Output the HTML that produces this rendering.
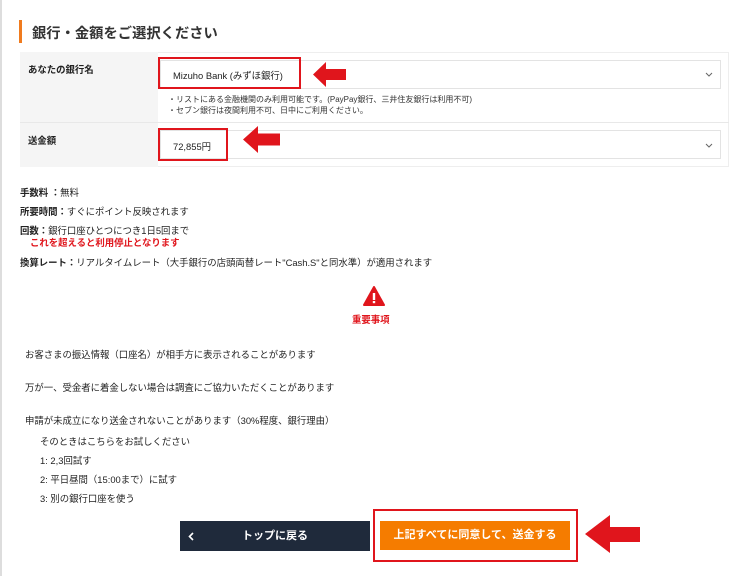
<!DOCTYPE html>
<html><head><meta charset="utf-8"><style>
*{margin:0;padding:0;box-sizing:border-box}
body{width:740px;height:576px;background:#fff;font-family:"Liberation Sans","Noto Sans CJK JP",sans-serif;color:#222;position:relative;overflow:hidden}
.a{position:absolute;white-space:nowrap}
.t{font-size:9.4px}
.b{font-weight:bold}
</style></head><body>
<div class="a" style="left:0;top:0;width:2px;height:576px;background:#ddd"></div>
<div class="a" style="left:19px;top:20px;width:3px;height:23px;background:#f07b1e"></div>
<div class="a b" style="left:32px;top:22px;font-size:14.3px;color:#333">銀行・金額をご選択ください</div>
<div class="a" style="left:20px;top:52px;width:709px;height:115px;border:1px solid #eee"></div>
<div class="a" style="left:20px;top:52px;width:138px;height:115px;background:#f5f5f5"></div>
<div class="a" style="left:20px;top:122px;width:709px;height:1px;background:#e8e8e8"></div>
<div class="a t b" style="left:28px;top:62px">あなたの銀行名</div>
<div class="a t b" style="left:28px;top:133px">送金額</div>
<div class="a" style="left:160px;top:60px;width:561px;height:29px;border:1px solid #e3e3e3;background:#fff"></div>
<div class="a" style="left:160px;top:130px;width:561px;height:29px;border:1px solid #e3e3e3;background:#fff"></div>
<svg class="a" style="left:705px;top:72px" width="8" height="5"><path d="M1 1 L4 4 L7 1" fill="none" stroke="#666" stroke-width="1"/></svg>
<svg class="a" style="left:705px;top:143px" width="8" height="5"><path d="M1 1 L4 4 L7 1" fill="none" stroke="#666" stroke-width="1"/></svg>
<div class="a" style="left:158px;top:57px;width:143px;height:32px;border:2px solid #e0151c"></div>
<div class="a t" style="left:173px;top:68px">Mizuho Bank (みずほ銀行)</div>
<div class="a" style="left:158px;top:128px;width:70px;height:33px;border:2px solid #e0151c"></div>
<div class="a t" style="left:173px;top:139px">72,855円</div>
<svg class="a" style="left:312px;top:61px" width="36" height="27"><path d="M1 13.5 L14 1 V8 H34 V19 H14 V26 Z" fill="#e0151c"/></svg>
<svg class="a" style="left:242px;top:125px" width="40" height="29"><path d="M1 14.5 L16 1 V8.5 H38 V20.5 H16 V28 Z" fill="#e0151c"/></svg>
<div class="a" style="left:168px;top:94px;font-size:8px;color:#333;line-height:11px">・リストにある金融機関のみ利用可能です。(PayPay銀行、三井住友銀行は利用不可)<br>・セブン銀行は夜間利用不可、日中にご利用ください。</div>
<div class="a t" style="left:20px;top:183px;line-height:19px"><b>手数料 ：</b>無料<br><b>所要時間：</b>すぐにポイント反映されます<br><b>回数：</b>銀行口座ひとつにつき1日5回まで</div>
<div class="a t b" style="left:30px;top:235px;color:#e0151c">これを超えると利用停止となります</div>
<div class="a t" style="left:20px;top:255px"><b>換算レート：</b>リアルタイムレート（大手銀行の店頭両替レート"Cash.S"と同水準）が適用されます</div>
<svg class="a" style="left:362px;top:285px" width="24" height="22"><path d="M12 2 L22 20 H2 Z" fill="#e0151c" stroke="#e0151c" stroke-width="2" stroke-linejoin="round"/><rect x="10.8" y="8" width="2.4" height="7" fill="#fff"/><rect x="10.8" y="16" width="2.4" height="2.2" fill="#fff"/></svg>
<div class="a t b" style="left:352px;top:312px;color:#e0151c">重要事項</div>
<div class="a t" style="left:25px;top:347px">お客さまの振込情報（口座名）が相手方に表示されることがあります</div>
<div class="a t" style="left:25px;top:380px">万が一、受金者に着金しない場合は調査にご協力いただくことがあります</div>
<div class="a t" style="left:25px;top:413px">申請が未成立になり送金されないことがあります（30%程度、銀行理由）</div>
<div class="a t" style="left:40px;top:432px;line-height:19px">そのときはこちらをお試しください<br>1: 2,3回試す<br>2: 平日昼間（15:00まで）に試す<br>3: 別の銀行口座を使う</div>
<div class="a" style="left:180px;top:521px;width:190px;height:30px;background:#1f2a3b;color:#fff">
<svg class="a" style="left:8px;top:11px" width="6" height="9"><path d="M5 1 L1.5 4.5 L5 8" fill="none" stroke="#fff" stroke-width="1.6"/></svg>
<div class="a b" style="left:0;top:0;width:190px;text-align:center;line-height:30px;font-size:11px">トップに戻る</div></div>
<div class="a" style="left:373px;top:509px;width:205px;height:53px;border:2px solid #e0151c"></div>
<div class="a b" style="left:380px;top:521px;width:190px;height:29px;background:#f57c00;color:#fff;font-size:11px;text-align:center;line-height:29px">上記すべてに同意して、送金する</div>
<svg class="a" style="left:584px;top:514px" width="58" height="40"><path d="M1 20 L26 1 V13 H56 V28 H26 V39 Z" fill="#e0151c"/></svg>
</body></html>
